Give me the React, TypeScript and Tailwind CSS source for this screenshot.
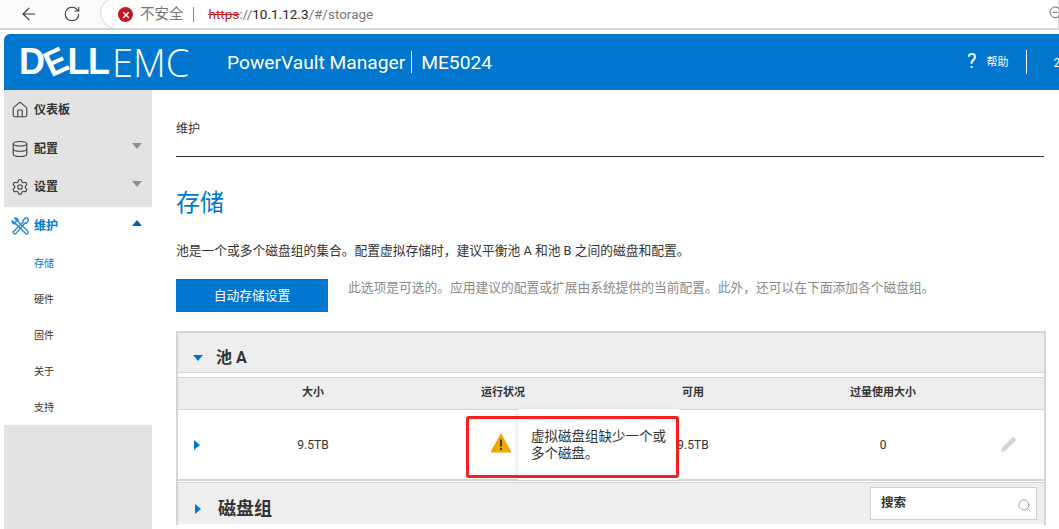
import { ArrowLeft, Database, House, Pencil, RotateCw, Search, Settings, X, ZoomOut } from "lucide-react";
import type { ReactNode } from "react";

const font = "font-['Roboto','Noto_Sans_CJK_SC',sans-serif]";
const tableCols = "grid-cols-[40px_190px_190px_190px_190px_1fr]";

function Caret({ dir, color }: { dir: "up" | "down" | "right"; color: string }) {
  const points = dir === "up" ? "0,8 10,8 5,2" : dir === "down" ? "0,2 10,2 5,8" : "2,0 8,5 2,10";
  return (
    <svg width="10" height="10" viewBox="0 0 10 10" className="shrink-0">
      <polygon points={points} fill={color} />
    </svg>
  );
}

function ToolsIcon() {
  return (
    <svg width="18" height="18" viewBox="0 0 18 18" fill="none" stroke="#2b8ad8" strokeWidth="1.4" strokeLinejoin="round">
      <path d="M1.2 3.6 3.6 6 6 3.6 3.6 1.2C5.6.6 7.6 2.4 7 4.6L16.6 14c.8.8.8 1.6.2 2.4-.8.8-1.6.6-2.4-.2L4.8 6.8C2.8 7.4.8 5.6 1.2 3.6Z" />
      <path d="M16.8 1.2 14.6.8 12 3.4l.2 1.6L2 15l1 2 2-.6L14 6l1.6.2 1.8-2.6Z" />
    </svg>
  );
}

function NavItem({ icon, label, active, caret }: { icon: ReactNode; label: string; active?: boolean; caret?: "up" | "down" }) {
  return (
    <div className={`flex h-[38.5px] items-center pl-[7px] pr-[10px] ${active ? "bg-white text-[#0076ce]" : "text-[#333]"}`}>
      <span className="flex w-[23px] justify-start">{icon}</span>
      <span className="flex-1 text-[12px] font-bold">{label}</span>
      {caret ? (
        <span className="-mt-[6px]">
          <Caret dir={caret} color={active ? "#0063ad" : "#8f8f8f"} />
        </span>
      ) : null}
    </div>
  );
}

function SubItem({ label, active }: { label: string; active?: boolean }) {
  return <div className={`flex h-[36px] items-center pl-[30px] pt-[1px] text-[10px] ${active ? "text-[#0076ce]" : "text-[#333]"}`}>{label}</div>;
}

export default function App() {
  return (
    <div className={`${font} h-[529px] w-[1059px] overflow-hidden bg-white`}>
      {/* browser chrome */}
      <div className="flex h-[30px] items-center border-b-2 border-[#d4d4d4] bg-[#fbfbfb] pl-[19px]">
        <ArrowLeft size={20} strokeWidth={1.3} className="text-[#333]" />
        <RotateCw size={18} strokeWidth={1.4} className="ml-[24px] text-[#333]" />
        <div className="ml-[19px] -mt-[2px] flex h-[32px] flex-1 items-center rounded-bl-[16px] rounded-tl-[16px] border border-[#d8d8d8] bg-white pl-[17px] pt-[3px]">
          <span className="flex h-[15px] w-[15px] items-center justify-center rounded-full bg-[#c5161d]">
            <X size={10} strokeWidth={3.5} className="text-white" />
          </span>
          <span className="ml-[7px] whitespace-nowrap text-[14.5px] text-[#777]">不安全</span>
          <span className="ml-[9px] h-[15px] w-px bg-[#888]" />
          <span className="ml-[15px] text-[13.5px] text-[#c5161d] line-through">https</span>
          <span className="text-[13.5px] text-[#777]">://</span>
          <span className="text-[13.5px] text-[#222]">10.1.12.3</span>
          <span className="text-[13.5px] text-[#777]">/#/storage</span>
          <ZoomOut size={16} strokeWidth={1.5} className="ml-auto mr-[-6px] -mt-[4px] text-[#666]" />
        </div>
      </div>
      <div className="h-[4px] bg-white" />

      <div className="ml-[4px]">
        {/* app header */}
        <header className="flex h-[56px] items-center overflow-hidden rounded-tl-[6px] bg-[#0076ce] pl-[15px] whitespace-nowrap text-white">
          <div className="flex w-[173px] shrink-0 items-center">
            <span className="flex w-[90px] items-center font-['Liberation_Sans',sans-serif] text-[36px] font-bold leading-none tracking-[-1.5px]">
              D<span className="inline-block w-[24px] rotate-[-25deg] scale-x-90">E</span>LL
            </span>
            <span className="ml-[3px] font-['Open_Sans',sans-serif] text-[38px] font-light leading-none">EMC</span>
          </div>
          <span className="ml-[35px] mt-[2px] shrink-0 text-[19.2px]">PowerVault Manager</span>
          <span className="ml-[6px] h-[22px] w-px shrink-0 bg-white" />
          <span className="ml-[9px] mt-[2px] shrink-0 text-[19.2px]">ME5024</span>
          <span className="ml-[475px] -mt-[2px] shrink-0 text-[20px]">?</span>
          <span className="ml-[10px] mt-[2px] shrink-0 text-[11px]">帮助</span>
          <span className="ml-[18px] h-[24px] w-px shrink-0 bg-white" />
          <span className="ml-[26px] mt-[2px] shrink-0 text-[12px]">2</span>
        </header>

        <div className="flex">
          {/* sidebar */}
          <aside className="h-[439px] w-[148px] shrink-0 bg-[#e3e3e3]">
            <div className="h-[1px]" />
            <NavItem icon={<House size={18} strokeWidth={1.5} className="text-[#444]" />} label="仪表板" />
            <NavItem icon={<Database size={18} strokeWidth={1.5} className="text-[#444]" />} label="配置" caret="down" />
            <NavItem icon={<Settings size={18} strokeWidth={1.5} className="text-[#444]" />} label="设置" caret="down" />
            <NavItem icon={<ToolsIcon />} label="维护" active caret="up" />
            <div className="bg-white">
              <SubItem label="存储" active />
              <SubItem label="硬件" />
              <SubItem label="固件" />
              <SubItem label="关于" />
              <SubItem label="支持" />
            </div>
          </aside>

          {/* main content */}
          <main className="relative flex-1 pl-[24px] pr-[15px]">
            <div className="mr-[2px] flex h-[67px] items-end border-b border-[#333] pb-[18px] text-[12px] text-[#333]">维护</div>
            <h1 className="mt-[29px] text-[24px] font-normal leading-[34px] text-[#0076ce]">存储</h1>
            <p className="mt-[21px] whitespace-nowrap text-[12.75px] leading-[20px] text-[#333]">池是一个或多个磁盘组的集合。配置虚拟存储时，建议平衡池 A 和池 B 之间的磁盘和配置。</p>
            <div className="mt-[18px] flex h-[33px] items-start">
              <button type="button" className="h-[33px] w-[152px] bg-[#0076ce] text-[12.75px] text-white">
                自动存储设置
              </button>
              <span className="ml-[20px] whitespace-nowrap text-[12.75px] leading-[18px] text-[#8a8a8a]">此选项是可选的。应用建议的配置或扩展由系统提供的当前配置。此外，还可以在下面添加各个磁盘组。</span>
            </div>

            {/* pool panel */}
            <section className="mt-[19px] h-[194px] w-[870px] border-x-2 border-t-2 border-[#d4d4d4]">
              <div className="flex h-[40px] items-center border-b border-[#d4d4d4] bg-[#eeeeee] pl-[15px] pt-[10px] text-[#333]">
                <Caret dir="down" color="#0076ce" />
                <span className="ml-[13px] text-[16px] font-bold">池 A</span>
              </div>
              <div className={`mt-[4px] grid h-[33px] items-center border-y border-[#d4d4d4] bg-[#eeeeee] text-center text-[11px] font-bold text-[#333] ${tableCols}`}>
                <span />
                <span>大小</span>
                <span>运行状况</span>
                <span>可用</span>
                <span>过量使用大小</span>
                <span />
              </div>
              <div className={`relative grid h-[71px] items-center border-b-2 border-[#d4d4d4] text-center text-[12px] text-[#333] ${tableCols}`}>
                <span className="absolute left-[14px] top-[30px]">
                  <Caret dir="right" color="#0076ce" />
                </span>
                <span />
                <span>9.5TB</span>
                <span />
                <span>9.5TB</span>
                <span>0</span>
                <Pencil size={17} fill="#d4d4d4" strokeWidth={1} className="ml-[22px] text-[#d4d4d4]" />
              </div>
              <div className="mt-[1px] flex h-[42px] items-center border-t border-[#d4d4d4] bg-[#eeeeee] pl-[15px] pt-[10px] text-[#333]">
                <Caret dir="right" color="#0076ce" />
                <span className="ml-[15px] text-[18px] font-bold">磁盘组</span>
              </div>
            </section>

            {/* search box */}
            <div className="absolute left-[718px] top-[397px] flex h-[33px] w-[167px] items-center border border-[#cfcfcf] bg-white pl-[10px] text-[12.5px] font-bold text-[#333]">
              搜索
              <Search size={15} strokeWidth={1} className="ml-auto mr-[4px] mt-[3px] text-[#777]" />
            </div>

            {/* health tooltip */}
            <div className="absolute left-[366px] top-[319px] flex h-[71px] w-[161px] flex-col justify-center whitespace-nowrap bg-white pl-[13px] text-[13.5px] leading-[17px] text-[#333] shadow-[-2px_0_4px_rgba(0,0,0,0.08)]">
              <span>虚拟磁盘组缺少一个或</span>
              <span>多个磁盘。</span>
            </div>
            <svg width="20" height="20" viewBox="0 0 20 20" className="absolute left-[339px] top-[343px]">
              <path d="M10 1 L20 19 H0 Z" fill="#f0a800" stroke="#f0a800" strokeLinejoin="round" />
              <rect x="9" y="6.5" width="2" height="7" fill="#4a3a10" />
              <rect x="9" y="15" width="2" height="2" fill="#4a3a10" />
            </svg>
            <div className="absolute left-[314px] top-[326px] h-[62px] w-[213px] rounded-[3px] border-[3px] border-[#f5201c]" />
          </main>
        </div>
      </div>
    </div>
  );
}
